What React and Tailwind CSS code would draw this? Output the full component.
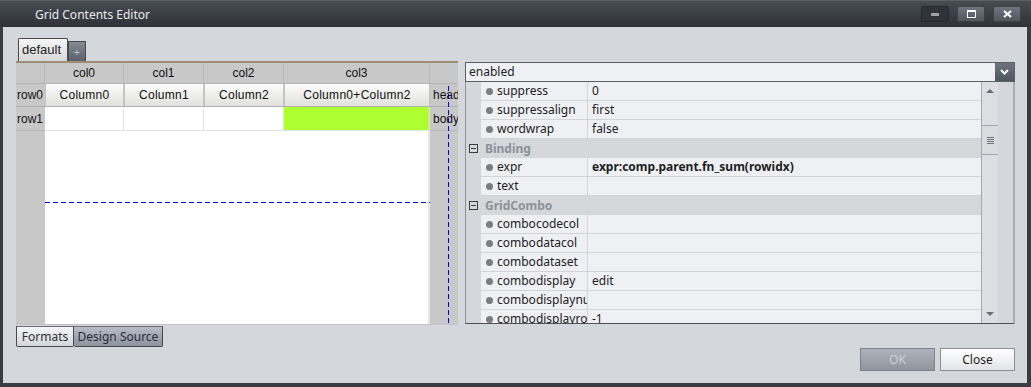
import React from "react";

const colWidths = ["w-[79px]", "w-[80px]", "w-[80px]", "w-[146px]"];

const props = [
    { type: "row", name: "suppress", value: "0" },
    { type: "row", name: "suppressalign", value: "first" },
    { type: "row", name: "wordwrap", value: "false" },
    { type: "cat", name: "Binding" },
    { type: "row", name: "expr", value: "expr:comp.parent.fn_sum(rowidx)", bold: true },
    { type: "row", name: "text", value: "" },
    { type: "cat", name: "GridCombo" },
    { type: "row", name: "combocodecol", value: "" },
    { type: "row", name: "combodatacol", value: "" },
    { type: "row", name: "combodataset", value: "" },
    { type: "row", name: "combodisplay", value: "edit" },
    { type: "row", name: "combodisplaynullvalue", value: "" },
    { type: "row", name: "combodisplayrowcount", value: "-1" },
];

function TitleButton({ children, dark }) {
    return (
        <div
            className={`w-[28px] h-[16px] rounded-[2px] flex items-center justify-center border ${
                dark
                    ? "bg-[#30333a] border-[#25282d]"
                    : "bg-linear-to-b from-[#70747c] to-[#52565e] border-[#3e4148]"
            }`}
        >
            {children}
        </div>
    );
}

function PropRow({ p }) {
    if (p.type === "cat") {
        return (
            <div className="flex h-[19px] bg-[#d5d7db] shrink-0">
                <div className="w-[15px] flex items-center pl-[3px]">
                    <div className="w-[9px] h-[9px] border border-[#3c3c3c] flex items-center justify-center">
                        <div className="w-[5px] h-px bg-[#3c3c3c]" />
                    </div>
                </div>
                <div className="pl-[4px] flex items-center font-bold text-[#8d9197]">
                    {p.name}
                </div>
            </div>
        );
    }
    return (
        <div className="flex h-[19px] shrink-0">
            <div className="w-[15px] bg-[#d5d7db]" />
            <div className="flex flex-1 min-w-0 border-b border-[#d2d4d8] bg-[#eef0f4]">
                <div className="w-[107px] shrink-0 flex items-center pl-[5px] gap-[4px] border-r border-[#d2d4d8] overflow-hidden whitespace-nowrap">
                    <span className="w-[7px] h-[7px] rounded-full bg-[#7c7c7c] shrink-0" />
                    <span className="flex-1 min-w-0 overflow-hidden text-[#222]">{p.name}</span>
                </div>
                <div
                    className={`flex items-center pl-[4px] text-[#222] whitespace-nowrap ${
                        p.bold ? "font-bold" : ""
                    }`}
                >
                    {p.value}
                </div>
            </div>
        </div>
    );
}

export default function App() {
    return (
        <div className="w-[1031px] h-[387px] flex flex-col bg-[#d4d7dc] font-['Noto_Sans',sans-serif] text-[12px] overflow-hidden">
            {/* Title bar */}
            <div className="h-[27px] shrink-0 flex items-center bg-linear-to-b from-[#474b53] to-[#2f3238] border-t border-[#5b5f67]">
                <span className="ml-[35px] mt-[2px] text-[12px] text-[#e8eaec]">
                    Grid Contents Editor
                </span>
                <div className="ml-auto mr-[10px] flex gap-[8px]">
                    <TitleButton dark>
                        <div className="w-[8px] h-[3px] bg-[#9da1a8]" />
                    </TitleButton>
                    <TitleButton>
                        <div className="w-[9px] h-[8px] border border-t-[2px] border-white" />
                    </TitleButton>
                    <TitleButton>
                        <svg width="9" height="8" viewBox="0 0 9 8">
                            <path d="M1 1 L8 7 M8 1 L1 7" stroke="#fff" strokeWidth="2" />
                        </svg>
                    </TitleButton>
                </div>
            </div>

            {/* Body */}
            <div className="flex-1 flex flex-col border-l-[3px] border-r-[4px] border-b-[4px] border-[#393c43] pl-[13px] pr-[12px] pt-[11px]">
                <div className="flex gap-[7px]">
                    {/* Left: grid designer */}
                    <div className="w-[442px] flex flex-col">
                        <div className="h-[23px] flex items-end pl-[2px]">
                            <div className="w-[50px] h-[23px] border border-b-0 border-[#4a4a4a] rounded-t-[2px] bg-linear-to-b from-[#f6f6f6] to-[#d6d8da] flex items-center pl-[3px] font-['Liberation_Sans',sans-serif] text-[13px] text-[#222]">
                                default
                            </div>
                            <div className="w-[18px] h-[20px] border border-b-0 border-[#4a4a4a] bg-linear-to-b from-[#848a94] to-[#5c626c] flex items-center justify-center text-[11px] text-[#c0c4ca] leading-none">
                                +
                            </div>
                        </div>
                        <div className="h-[263px] flex flex-col border-t-[2px] border-[#9d8e74] bg-white font-['Liberation_Sans',sans-serif] text-[12px] text-[#111] relative overflow-hidden">
                            {/* header row */}
                            <div className="flex h-[21px] bg-[#c8c8c8] border-b border-[#b4b4b4] shrink-0">
                                <div className="w-[29px] border-r border-[#b8b8b8]" />
                                {["col0", "col1", "col2", "col3"].map((c, i) => (
                                    <div
                                        key={c}
                                        className={`${colWidths[i]} border-r border-[#b8b8b8] flex items-center justify-center`}
                                    >
                                        {c}
                                    </div>
                                ))}
                                <div className="w-[28px]" />
                            </div>
                            {/* row0 */}
                            <div className="flex h-[23px] border-b border-[#b0b0b0] shrink-0">
                                <div className="w-[29px] bg-[#c8c8c8] flex items-center pl-px">row0</div>
                                {["Column0", "Column1", "Column2", "Column0+Column2"].map((c, i) => (
                                    <div
                                        key={c}
                                        className={`${colWidths[i]} border-x border-[#c4c4c4] bg-linear-to-b from-[#fcfcfc] to-[#e0e0dc] flex items-center justify-center tracking-[0.3px]`}
                                    >
                                        {c}
                                    </div>
                                ))}
                                <div className="w-[28px] bg-[#c8c8c8] flex items-center pl-[3px] overflow-hidden whitespace-nowrap">
                                    <span className="w-[25px] overflow-hidden">head</span>
                                </div>
                            </div>
                            {/* row1 */}
                            <div className="flex h-[24px] shrink-0">
                                <div className="w-[29px] bg-[#c8c8c8] border-b border-[#b8b8b8] flex items-center pl-px">row1</div>
                                {colWidths.map((w, i) => (
                                    <div
                                        key={i}
                                        className={`${w} border-r border-b border-[#e2e2e2] ${
                                            i === 3 ? "bg-[#adff2f]" : "bg-white"
                                        }`}
                                    />
                                ))}
                                <div className="w-[28px] bg-[#c8c8c8] border-b border-[#b8b8b8] flex items-center pl-[3px] overflow-hidden whitespace-nowrap">
                                    <span className="w-[25px] overflow-hidden">body</span>
                                </div>
                            </div>
                            {/* rest */}
                            <div className="flex flex-1">
                                <div className="w-[29px] bg-[#c8c8c8]" />
                                <div className="w-[385px] bg-white border-r-2 border-[#e6e6e6]" />
                                <div className="w-[28px] bg-[#c8c8c8]" />
                            </div>
                            {/* guide lines */}
                            <svg className="absolute left-0 top-0 pointer-events-none" width="442" height="261">
                                <line x1="29" y1="139.5" x2="414" y2="139.5" stroke="#0000ff" strokeWidth="1" strokeDasharray="5 3" />
                                <line x1="432.5" y1="23" x2="432.5" y2="261" stroke="#0000ff" strokeWidth="1" strokeDasharray="5 3" />
                            </svg>
                        </div>
                        {/* bottom tabs */}
                        <div className="flex h-[23px] border-t border-[#c0c3c8] pt-px">
                            <div className="w-[58px] h-[21px] border border-[#4a4a4a] border-t-[#6a6e74] rounded-b-[2px] bg-linear-to-b from-[#f4f5f7] to-[#d2d6da] flex items-center justify-center text-[#333]">
                                Formats
                            </div>
                            <div className="w-[89px] h-[21px] border border-l-0 border-[#4a4a4a] border-t-[#6a6e74] rounded-b-[2px] bg-linear-to-b from-[#b8bcc8] to-[#8c929e] flex items-center justify-center text-[#2a2d33]">
                                Design Source
                            </div>
                        </div>
                    </div>

                    {/* Right: property grid */}
                    <div className="w-[551px] flex flex-col">
                        <div className="h-[24px]" />
                        <div className="h-[20px] flex border border-[#59606a] bg-[#eef0f4]">
                            <div className="flex-1 flex items-center pl-[3px] text-[#222]">enabled</div>
                            <div className="w-[19px] bg-linear-to-b from-[#6e747c] to-[#50565e] flex items-center justify-center">
                                <svg width="9" height="6" viewBox="0 0 9 6">
                                    <path d="M1 1 L4.5 4.5 L8 1" stroke="#fff" strokeWidth="2" fill="none" />
                                </svg>
                            </div>
                        </div>
                        <div className="w-[550px] h-[242px] flex border-l border-[#8c939c] border-b border-b-[#4e5258] border-r-2 border-r-[#a8acb2] overflow-hidden">
                            <div className="w-[515px] flex flex-col overflow-hidden">
                                {props.map((p, i) => (
                                    <PropRow key={i} p={p} />
                                ))}
                            </div>
                            <div className="w-[17px] flex flex-col bg-[#dcdee2] border-l border-[#a6aab0]">
                                <div className="h-[18px] flex items-center justify-center">
                                    <svg width="8" height="4" viewBox="0 0 8 4">
                                        <path d="M0 4 L4 0 L8 4 Z" fill="#6a6e74" />
                                    </svg>
                                </div>
                                <div className="h-[25px]" />
                                <div className="h-[30px] border-y border-[#a6aab0] bg-[#d9dbdf] flex flex-col items-center justify-center gap-[1px]">
                                    <div className="w-[7px] h-px bg-[#70747a]" />
                                    <div className="w-[7px] h-px bg-[#70747a]" />
                                    <div className="w-[7px] h-px bg-[#70747a]" />
                                    <div className="w-[7px] h-px bg-[#70747a]" />
                                </div>
                                <div className="flex-1" />
                                <div className="h-[18px] flex items-center justify-center">
                                    <svg width="8" height="4" viewBox="0 0 8 4">
                                        <path d="M0 0 L8 0 L4 4 Z" fill="#6a6e74" />
                                    </svg>
                                </div>
                            </div>
                        </div>
                    </div>
                </div>

                {/* Buttons */}
                <div className="flex justify-end gap-[5px] mt-[1px]">
                    <div className="w-[75px] h-[23px] border border-[#7c818a] bg-linear-to-b from-[#aeb3bc] to-[#8f949e] flex items-center justify-center text-[#cdd0d6]">
                        OK
                    </div>
                    <div className="w-[75px] h-[23px] border border-[#8a8e96] bg-linear-to-b from-[#ffffff] to-[#e2e4e8] flex items-center justify-center text-[#222]">
                        Close
                    </div>
                </div>
            </div>
        </div>
    );
}
